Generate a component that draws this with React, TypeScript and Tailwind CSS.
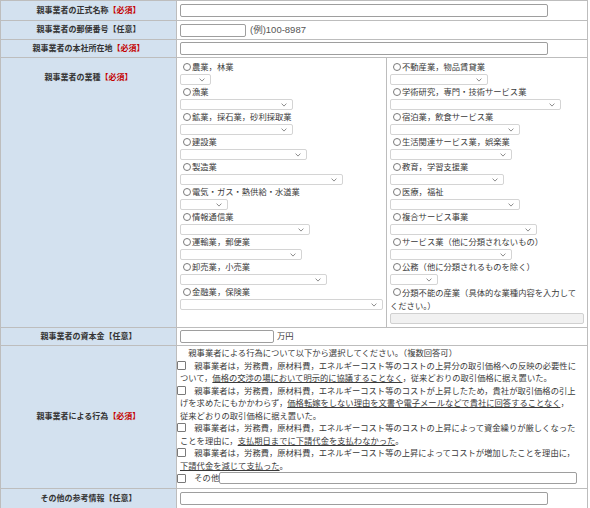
import type { ReactNode } from 'react';

const leftIndustries: [string, number][] = [
    ['農業，林業', 31],
    ['漁業', 113],
    ['鉱業，採石業，砂利採取業', 113],
    ['建設業', 127],
    ['製造業', 163],
    ['電気・ガス・熱供給・水道業', 48],
    ['情報通信業', 130],
    ['運輸業，郵便業', 122],
    ['卸売業，小売業', 147],
    ['金融業，保険業', 203],
];

const rightIndustries: [string, number][] = [
    ['不動産業，物品賃貸業', 98],
    ['学術研究，専門・技術サービス業', 171],
    ['宿泊業，飲食サービス業', 130],
    ['生活関連サービス業，娯楽業', 122],
    ['教育，学習支援業', 114],
    ['医療，福祉', 130],
    ['複合サービス事業', 147],
    ['サービス業（他に分類されないもの）', 122],
    ['公務（他に分類されるものを除く）', 48],
];

const Req = () => <span className="text-[#c40000]">【必須】</span>;
const Opt = () => <span>【任意】</span>;

function Row({ label, h, top, children }: { label: ReactNode; h?: string; top?: boolean; children: ReactNode }) {
    return (
        <div className={`grid grid-cols-[176px_1fr] ${h ?? ''}`}>
            <div
                className={`flex justify-center border-r border-b border-[#bdbdbd] bg-[#d3e1ef] text-[8px] font-bold text-[#333] ${
                    top ? 'items-start pt-[14px]' : 'items-center'
                }`}
            >
                <span>{label}</span>
            </div>
            <div className="border-r border-b border-[#bdbdbd]">{children}</div>
        </div>
    );
}

function Select({ w }: { w: number }) {
    return (
        <div className="relative h-[11px] rounded-[2px] border border-[#d4d4d4] bg-white" style={{ width: w }}>
            <svg className="absolute top-[3px] right-[5px]" width="6" height="4" viewBox="0 0 6 4">
                <path d="M0.6 0.6 L3 3.1 L5.4 0.6" fill="none" stroke="#808080" strokeWidth="0.9" />
            </svg>
        </div>
    );
}

const Radio = () => (
    <span className="mt-[2px] mr-[1px] ml-[3px] inline-block h-[8px] w-[8px] shrink-0 rounded-full border border-[#7a7a7a] bg-white" />
);

const Check = () => (
    <span className="ml-[-3px] inline-block h-[9px] w-[9px] rounded-[1px] border border-[#7a7a7a] bg-white align-[-1px]" />
);

function Industry({ name, w }: { name: string; w: number }) {
    return (
        <div className="mt-[1px]">
            <div className="flex h-[13px] items-start leading-[13px]">
                <Radio />
                <span>{name}</span>
            </div>
            <Select w={w} />
        </div>
    );
}

const TextBox = ({ w, h = 'h-[13px]', gray }: { w: string; h?: string; gray?: boolean }) => (
    <div className={`${w} ${h} rounded-[2px] border ${gray ? 'border-[#d0d0d0] bg-[#f1f1f1]' : 'border-[#9e9e9e] bg-white'}`} />
);

export default function App() {
    return (
        <div className="w-[588px] border-t border-l border-[#bdbdbd] bg-white font-['Liberation_Sans','Noto_Sans_CJK_JP',sans-serif] text-[8.3px] text-[#3a3a3a]">
            <Row h="h-[20px]" label={<>親事業者の正式名称<Req /></>}>
                <div className="flex h-full items-center px-[3px]">
                    <TextBox w="w-[368px]" />
                </div>
            </Row>

            <Row h="h-[19px]" label={<>親事業者の郵便番号<Opt /></>}>
                <div className="flex h-full items-center px-[3px]">
                    <TextBox w="w-[66px]" />
                    <span className="ml-[4px] text-[9.5px] text-[#555]">(例)100-8987</span>
                </div>
            </Row>

            <Row h="h-[18px]" label={<>親事業者の本社所在地<Req /></>}>
                <div className="flex h-full items-center px-[3px]">
                    <TextBox w="w-[368px]" />
                </div>
            </Row>

            <Row top label={<>親事業者の業種<Req /></>}>
                <div className="grid grid-cols-[210px_1fr]">
                    <div className="border-r border-[#bdbdbd] px-[3px] pt-[2px] pb-[3px]">
                        {leftIndustries.map(([name, w]) => (
                            <Industry key={name} name={name} w={w} />
                        ))}
                    </div>
                    <div className="px-[3px] pt-[2px] pb-[3px]">
                        {rightIndustries.map(([name, w]) => (
                            <Industry key={name} name={name} w={w} />
                        ))}
                        <div className="mt-[1px] leading-[13px]">
                            <span className="inline-flex">
                                <Radio />
                            </span>
                            分類不能の産業（具体的な業種内容を入力してください。）
                        </div>
                        <TextBox w="w-full" h="h-[11px]" gray />
                    </div>
                </div>
            </Row>

            <Row h="h-[18px]" label={<>親事業者の資本金<Opt /></>}>
                <div className="flex h-full items-center px-[3px]">
                    <TextBox w="w-[94px]" />
                    <span className="ml-[3px]">万円</span>
                </div>
            </Row>

            <Row h="h-[143px]" label={<>親事業者による行為<Req /></>}>
                <div className="px-[3px] pt-[1px] leading-[12.5px] whitespace-nowrap">
                    <div>　親事業者による行為について以下から選択してください。（複数回答可）</div>
                    <div>
                        <Check />　親事業者は，労務費，原材料費，エネルギーコスト等のコストの上昇分の取引価格への反映の必要性に
                        <br />
                        ついて，<u>価格の交渉の場において明示的に協議することなく</u>，従来どおりの取引価格に据え置いた。
                    </div>
                    <div>
                        <Check />　親事業者は，労務費，原材料費，エネルギーコスト等のコストが上昇したため，貴社が取引価格の引上
                        <br />
                        げを求めたにもかかわらず，<u>価格転嫁をしない理由を文書や電子メールなどで貴社に回答することなく</u>，
                        <br />
                        従来どおりの取引価格に据え置いた。
                    </div>
                    <div>
                        <Check />　親事業者は，労務費，原材料費，エネルギーコスト等のコストの上昇によって資金繰りが厳しくなった
                        <br />
                        ことを理由に，<u>支払期日までに下請代金を支払わなかった</u>。
                    </div>
                    <div>
                        <Check />　親事業者は，労務費，原材料費，エネルギーコスト等の上昇によってコストが増加したことを理由に，
                        <br />
                        <u>下請代金を減じて支払った</u>。
                    </div>
                    <div className="flex h-[12.5px] items-center">
                        <Check />
                        <span>　その他</span>
                        <TextBox w="w-[358px]" h="h-[12px]" />
                    </div>
                </div>
            </Row>

            <Row h="h-[20px]" label={<>その他の参考情報<Opt /></>}>
                <div className="flex h-full items-center px-[3px]">
                    <TextBox w="w-[368px]" />
                </div>
            </Row>
        </div>
    );
}
